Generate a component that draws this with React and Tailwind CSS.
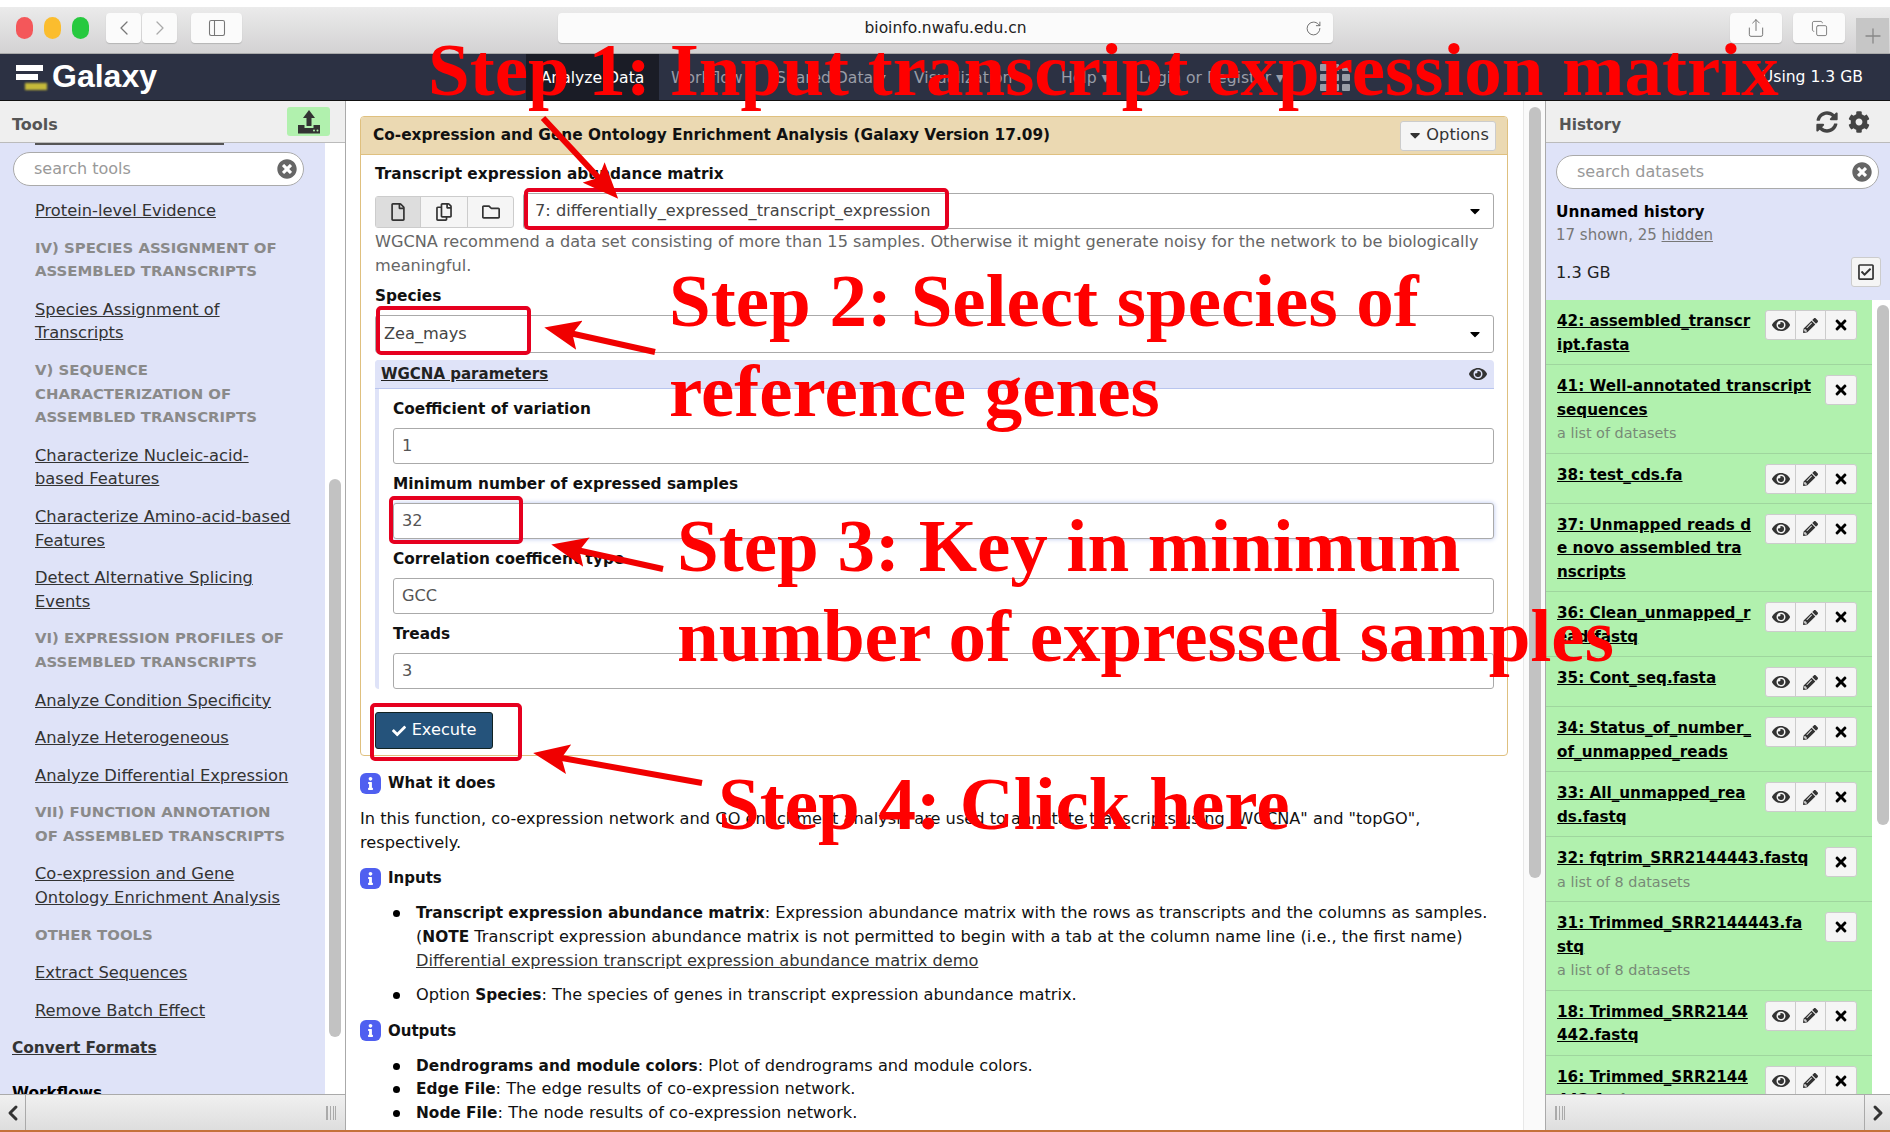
import { ChevronLeft, ChevronRight, RotateCw, Share, Plus, PanelLeft, Copy } from "lucide-react";
import {
  FaEye,
  FaPencilAlt,
  FaTimes,
  FaCheck,
  FaCog,
  FaSyncAlt,
  FaCaretDown,
  FaTimesCircle,
  FaRegFile,
  FaRegCopy,
  FaRegFolder,
  FaRegCheckSquare,
  FaInfo,
} from "react-icons/fa";

const tools = [
  { link: ["Protein-level Evidence"] },
  { head: ["IV) SPECIES ASSIGNMENT OF", "ASSEMBLED TRANSCRIPTS"] },
  { link: ["Species Assignment of", "Transcripts"] },
  { head: ["V) SEQUENCE", "CHARACTERIZATION OF", "ASSEMBLED TRANSCRIPTS"] },
  { link: ["Characterize Nucleic-acid-", "based Features"] },
  { link: ["Characterize Amino-acid-based", "Features"] },
  { link: ["Detect Alternative Splicing", "Events"] },
  { head: ["VI) EXPRESSION PROFILES OF", "ASSEMBLED TRANSCRIPTS"] },
  { link: ["Analyze Condition Specificity"] },
  { link: ["Analyze Heterogeneous"] },
  { link: ["Analyze Differential Expression"] },
  { head: ["VII) FUNCTION ANNOTATION", "OF ASSEMBLED TRANSCRIPTS"] },
  { link: ["Co-expression and Gene", "Ontology Enrichment Analysis"] },
  { head: ["OTHER TOOLS"] },
  { link: ["Extract Sequences"] },
  { link: ["Remove Batch Effect"] },
];

const datasets = [
  { title: ["42: assembled_transcr", "ipt.fasta"], full: true },
  { title: ["41: Well-annotated transcript", "sequences"], sub: "a list of datasets" },
  { title: ["38: test_cds.fa"], full: true },
  { title: ["37: Unmapped reads d", "e novo assembled tra", "nscripts"], full: true },
  { title: ["36: Clean_unmapped_r", "ead.fastq"], full: true },
  { title: ["35: Cont_seq.fasta"], full: true },
  { title: ["34: Status_of_number_", "of_unmapped_reads"], full: true },
  { title: ["33: All_unmapped_rea", "ds.fastq"], full: true },
  { title: ["32: fqtrim_SRR2144443.fastq"], sub: "a list of 8 datasets" },
  { title: ["31: Trimmed_SRR2144443.fa", "stq"], sub: "a list of 8 datasets" },
  { title: ["18: Trimmed_SRR2144", "442.fastq"], full: true },
  { title: ["16: Trimmed_SRR2144", "443.fastq"], full: true },
];

const Lines = ({ lines }) =>
  lines.map((l, i) => (
    <span key={i}>
      {l}
      {i < lines.length - 1 && <br />}
    </span>
  ));

const ToolbarButton = ({ className, children }) => (
  <div className={`h-[30px] bg-[#fbfbfb] rounded-[4px] shadow-[0_1px_1px_#b5b5b5] flex items-center justify-center ${className}`}>
    {children}
  </div>
);

const SearchBox = ({ placeholder, className }) => (
  <div className={`h-[34px] bg-white rounded-full border border-[#aaa] flex items-center justify-between pl-[20px] pr-[6px] text-[16px] text-[#999] ${className}`}>
    <span>{placeholder}</span>
    <FaTimesCircle className="text-[#666] text-[20px]" />
  </div>
);

const Field = ({ label, value, glow }) => (
  <div>
    <div className="font-bold text-[#111] leading-[24px] h-[24px] mt-[8px] mb-[7px] text-[15.35px]">{label}</div>
    <div className={`h-[36px] bg-white border border-[#aaa] rounded-[3px] flex items-center pl-[8px] text-[#555] ${glow ? "shadow-[0_0_5px_#b7c4ee]" : ""}`}>
      {value}
    </div>
  </div>
);

const InfoIcon = () => (
  <span className="w-[21px] h-[21px] rounded-[6px] bg-[#4f5ff0] text-white flex items-center justify-center shrink-0">
    <FaInfo className="text-[13px]" />
  </span>
);

const HelpHead = ({ children, className }) => (
  <div className={`flex items-center gap-[7px] font-bold text-[#111] h-[24px] text-[15px] ${className}`}>
    <InfoIcon />
    {children}
  </div>
);

const Bullet = ({ children, className }) => (
  <div className={`relative pl-[56px] leading-[23.6px] [&_b]:text-[15.35px] [&_b]:leading-none ${className}`}>
    <span className="absolute left-[33px] top-[9px] w-[7px] h-[7px] rounded-full bg-black" />
    {children}
  </div>
);

const Dataset = ({ item }) => (
  <div className="relative pt-[10px] pb-[7px] pl-[11px] border-b border-[#9fd69e] min-h-[50px] leading-[23.5px] shrink-0">
    <div className="font-bold text-black underline text-[15.2px]">
      <Lines lines={item.title} />
    </div>
    {item.sub && <div className="text-[#778a77] text-[14.4px]">{item.sub}</div>}
    <div className="absolute right-[15px] top-[10px] flex h-[30px] bg-[#f5f5f5] border border-[#ccc] rounded-[3px] text-black divide-x divide-[#ccc]">
      {item.full && (
        <>
          <span className="w-[30px] flex items-center justify-center text-[#333] text-[18px]">
            <FaEye />
          </span>
          <span className="w-[30px] flex items-center justify-center text-[#333] text-[15px]">
            <FaPencilAlt />
          </span>
        </>
      )}
      <span className="w-[30px] flex items-center justify-center text-[16px]">
        <FaTimes />
      </span>
    </div>
  </div>
);

const RedBox = ({ className }) => (
  <div className={`absolute border-[4px] border-[#e6001f] rounded-[5px] ${className}`} />
);

const BigText = ({ className, children }) => (
  <div className={`absolute whitespace-nowrap font-['Liberation_Serif',serif] font-bold text-[#ff0000] text-[75px] leading-[76px] ${className}`}>
    {children}
  </div>
);

const Arrow = ({ x1, y1, x2, y2 }) => (
  <line x1={x1} y1={y1} x2={x2} y2={y2} stroke="#f00000" strokeWidth="6" markerEnd="url(#head)" />
);

export default function App() {
  return (
    <div className="relative w-[1890px] h-[1132px] overflow-hidden flex flex-col bg-white font-['DejaVu_Sans',sans-serif] text-[16.2px] text-[#222]">
      <div className="h-[7px] shrink-0 bg-white" />

      {/* safari toolbar */}
      <div className="h-[47px] shrink-0 flex items-start pt-[6px] bg-gradient-to-b from-[#ebebeb] to-[#d3d2d3] border-b border-[#aaa] text-[#777]">
        <span className="w-[17px] h-[22px] ml-[16px] mt-[4px] rounded-full bg-[#f4575a]" />
        <span className="w-[17px] h-[22px] ml-[11px] mt-[4px] rounded-full bg-[#fbbd2e]" />
        <span className="w-[17px] h-[22px] ml-[11px] mt-[4px] rounded-full bg-[#27c93f]" />
        <ToolbarButton className="w-[35px] ml-[17px]"><ChevronLeft size={24} strokeWidth={1.3} /></ToolbarButton>
        <ToolbarButton className="w-[35px] ml-[1px] text-[#aaa]"><ChevronRight size={24} strokeWidth={1.3} /></ToolbarButton>
        <ToolbarButton className="w-[51px] ml-[14px]"><PanelLeft size={20} strokeWidth={1.3} /></ToolbarButton>
        <ToolbarButton className="w-[775px] ml-[316px] relative">
          <span className="text-[#222] text-[15.5px] mt-[2px]">bioinfo.nwafu.edu.cn</span>
          <RotateCw size={17} strokeWidth={1.3} className="absolute right-[11px] text-[#666]" />
        </ToolbarButton>
        <ToolbarButton className="w-[52px] ml-[397px]"><Share size={20} strokeWidth={1.2} /></ToolbarButton>
        <ToolbarButton className="w-[52px] ml-[11px]"><Copy size={17} strokeWidth={1.3} /></ToolbarButton>
        <div className="w-[33px] h-[35px] ml-[11px] mt-[5px] bg-[#c6c6c6] flex items-center justify-center text-[#888]">
          <Plus size={24} strokeWidth={1.3} />
        </div>
      </div>

      {/* masthead */}
      <div className="h-[47px] shrink-0 bg-[#2c3143] border-b border-[#111] flex items-center text-[15.6px] text-[#9a9da8] relative">
        <div className="ml-[16px] w-[28px] relative h-[30px] shrink-0">
          <span className="absolute left-0 top-[3px] w-[27px] h-[6px] bg-white" />
          <span className="absolute left-0 top-[12px] w-[22px] h-[6px] bg-white" />
          <span className="absolute left-[9px] top-[21px] w-[22px] h-[7px] bg-[#c5b93a] blur-[1px]" />
        </div>
        <span className="ml-[8px] w-[105px] text-white font-bold text-[32px] leading-none font-['Liberation_Sans',sans-serif] -mt-[2px]">Galaxy</span>
        <div className="ml-[369px] w-[133px] h-full bg-[#1a1c26] flex items-center justify-center pt-[3px] text-white">Analyze Data</div>
        <span className="ml-[12px] w-[105px] mt-[3px]">Workflow</span>
        <span className="w-[138px] mt-[3px]">Shared Data ▾</span>
        <span className="w-[147px] mt-[3px]">Visualization ▾</span>
        <span className="w-[78px] mt-[3px]">Help ▾</span>
        <span className="w-[181px] mt-[3px] whitespace-nowrap">Login or Register ▾</span>
        <div className="grid grid-cols-3 gap-[3px] w-[30px] shrink-0">
          {[0, 1, 2, 3, 4, 5, 6, 7, 8].map((i) => (
            <span key={i} className="w-[8px] h-[7px] rounded-[1px] bg-[#9a9da8]" />
          ))}
        </div>
        <span className="ml-auto mr-[27px] mt-[1px] text-white">Using 1.3 GB</span>
      </div>

      {/* panels */}
      <div className="flex-1 min-h-0 flex">
        <aside className="w-[346px] shrink-0 flex flex-col border-r border-[#aaa]">
          <div className="h-[42px] shrink-0 bg-[#efefef] border-b border-[#bbb] flex items-center justify-between pl-[12px] pr-[15px]">
            <span className="font-bold text-[#555] text-[16px] mt-[6px]">Tools</span>
            <span className="w-[43px] h-[29px] rounded-[3px] bg-[#b1f1ae] flex items-center justify-center">
              <svg width="24" height="26" viewBox="0 0 24 26" fill="#333">
                <path d="M12 1L18 9H14.5V17H9.5V9H6Z" />
                <path d="M1 16H7.5V19H16.5V16H23V24.5H1Z" />
                <circle cx="17" cy="21.5" r="1" fill="#b1f1ae" />
                <circle cx="20.5" cy="21.5" r="1" fill="#b1f1ae" />
              </svg>
            </span>
          </div>
          <div className="flex-1 min-h-0 flex">
            <div className="w-[325px] bg-[#dfe3f8] overflow-hidden relative leading-[23.6px]">
              <div className="absolute left-[35px] top-0 w-[189px] h-[2px] bg-[#555]" />
              <SearchBox placeholder="search tools" className="ml-[13px] mt-[9px] w-[291px] mb-[13px]" />
              <div className="pl-[35px] mb-[15px] text-[16.3px]">
                {tools.map((t, i) =>
                  t.head ? (
                    <div key={i} className="font-bold text-[#8a8a8a] mb-[14px] text-[14.9px]">
                      <Lines lines={t.head} />
                    </div>
                  ) : (
                    <div key={i} className="text-[#333] underline mb-[14px]">
                      <Lines lines={t.link} />
                    </div>
                  )
                )}
              </div>
              <div className="pl-[12px] font-bold text-[#333] underline text-[15.4px]">Convert Formats</div>
              <div className="pl-[12px] mt-[21px] font-bold text-black text-[15.4px]">Workflows</div>
            </div>
            <div className="flex-1 bg-white pl-[4px] pt-[336px]">
              <div className="w-[12px] h-[558px] rounded-full bg-[#c2c2c2]" />
            </div>
          </div>
          <div className="h-[36px] shrink-0 bg-gradient-to-b from-[#f0f0f0] to-[#dedede] border-t border-[#aaa] flex items-center justify-between">
            <div className="w-[26px] h-full border-r border-[#aaa] flex items-center justify-center text-[#333]">
              <ChevronLeft size={24} strokeWidth={3} />
            </div>
            <span className="mr-[9px] w-[10px] h-[14px] border-x border-[#aaa] bg-[repeating-linear-gradient(90deg,#aaa_0,#aaa_1px,transparent_1px,transparent_3px)]" />
          </div>
        </aside>

        {/* center */}
        <main className="flex-1 min-w-0 flex">
          <div className="flex-1 min-w-0 overflow-hidden pl-[14px] pr-[15px] pt-[15px] bg-white">
            <div className="h-[640px] border border-[#dfc07f] rounded-[4px] overflow-hidden">
              <div className="h-[38px] bg-[#ebd9b2] border-b border-[#dfc07f] flex items-center justify-between pl-[12px] pr-[11px]">
                <span className="font-bold text-[#111] text-[15.35px]">Co-expression and Gene Ontology Enrichment Analysis (Galaxy Version 17.09)</span>
                <span className="h-[30px] w-[96px] bg-[#f5f5f5] border border-[#ccc] rounded-[3px] flex items-center justify-center gap-[3px] text-[#333]">
                  <FaCaretDown />
                  Options
                </span>
              </div>
              <div className="pl-[14px] pr-[13px]">
                <div className="font-bold text-[#111] leading-[24px] mt-[7px] mb-[7px] text-[15.35px]">Transcript expression abundance matrix</div>
                <div className="flex gap-[9px] h-[36px]">
                  <div className="w-[139px] h-[32px] mt-[3px] flex border border-[#ccc] rounded-[3px] bg-[#f5f5f5] divide-x divide-[#ccc] text-[#333] text-[18px]">
                    <span className="w-[45px] bg-[#ddd] flex items-center justify-center"><FaRegFile /></span>
                    <span className="w-[47px] flex items-center justify-center"><FaRegCopy /></span>
                    <span className="flex-1 flex items-center justify-center"><FaRegFolder /></span>
                  </div>
                  <div className="flex-1 border border-[#aaa] rounded-[3px] flex items-center justify-between pl-[11px] pr-[10px] text-[#444]">
                    7: differentially_expressed_transcript_expression
                    <FaCaretDown className="text-black text-[16px]" />
                  </div>
                </div>
                <div className="text-[#666] leading-[24px] mt-[1px] text-[16.15px]">
                  WGCNA recommend a data set consisting of more than 15 samples. Otherwise it might generate noisy for the network to be biologically
                  <br />
                  meaningful.
                </div>
                <div className="font-bold text-[#111] leading-[24px] mt-[6px] mb-[7px] text-[15.35px]">Species</div>
                <div className="h-[38px] border border-[#aaa] rounded-[3px] flex items-center justify-between pl-[8px] pr-[10px] text-[#444]">
                  Zea_mays
                  <FaCaretDown className="text-black text-[16px]" />
                </div>
                <div className="mt-[7px] border-l-[4px] border-[#dfe3f8] rounded-l-[4px]">
                  <div className="h-[29px] -ml-[4px] bg-[#dfe3f8] border-b border-[#b9c5ee] rounded-t-[4px] flex items-center justify-between pl-[6px] pr-[7px]">
                    <span className="font-bold text-[#222] underline text-[15px]">WGCNA parameters</span>
                    <FaEye className="text-[#333] text-[18px]" />
                  </div>
                  <div className="pl-[14px]">
                    <Field label="Coefficient of variation" value="1" />
                    <Field label="Minimum number of expressed samples" value="32" glow />
                    <Field label="Correlation coefficent type" value="GCC" />
                    <Field label="Treads" value="3" />
                  </div>
                </div>
                <div className="mt-[23px] w-[118px] h-[37px] bg-[#25537b] border border-[#122] rounded-[3px] flex items-center justify-center gap-[6px] text-white">
                  <FaCheck className="text-[14px]" />
                  Execute
                </div>
              </div>
            </div>

            <div className="mt-[15px] text-[#111]">
              <HelpHead>What it does</HelpHead>
              <p className="mt-[12px] leading-[23.7px]">
                In this function, co-expression network and GO enrichment analysis are used to annotate transcripts using "WGCNA" and "topGO",
                <br />
                respectively.
              </p>
              <HelpHead className="mt-[12px]">Inputs</HelpHead>
              <Bullet className="mt-[11px]">
                <b>Transcript expression abundance matrix</b>: Expression abundance matrix with the rows as transcripts and the columns as samples.
                <br />
                (<b>NOTE</b> Transcript expression abundance matrix is not permitted to begin with a tab at the column name line (i.e., the first name)
                <br />
                <span className="underline text-[#333]">Differential expression transcript expression abundance matrix demo</span>
              </Bullet>
              <Bullet className="mt-[11px]">
                Option <b>Species</b>: The species of genes in transcript expression abundance matrix.
              </Bullet>
              <HelpHead className="mt-[12px]">Outputs</HelpHead>
              <Bullet className="mt-[11px]"><b>Dendrograms and module colors</b>: Plot of dendrograms and module colors.</Bullet>
              <Bullet><b>Edge File</b>: The edge results of co-expression network.</Bullet>
              <Bullet><b>Node File</b>: The node results of co-expression network.</Bullet>
              <Bullet><b>Module File</b>: The module results of co-expression network.</Bullet>
            </div>
          </div>
          <div className="w-[22px] shrink-0 bg-[#fafafa] border-l border-[#e8e8e8] pl-[5px] pt-[6px]">
            <div className="w-[12px] h-[771px] rounded-full bg-[#c2c2c2]" />
          </div>
        </main>

        {/* history */}
        <aside className="w-[345px] shrink-0 flex flex-col border-l border-[#aaa]">
          <div className="h-[42px] shrink-0 bg-[#efefef] border-b border-[#bbb] flex items-center justify-between pl-[13px] pr-[20px]">
            <span className="font-bold text-[#555] text-[15.2px] mt-[7px]">History</span>
            <span className="flex gap-[10px] text-[#444] text-[22px]">
              <FaSyncAlt />
              <FaCog />
            </span>
          </div>
          <div className="h-[157px] shrink-0 bg-[#dfe3f8] pl-[10px] pr-[10px] pt-[12px] relative">
            <SearchBox placeholder="search datasets" className="w-[323px]" />
            <div className="mt-[11px] font-bold text-black leading-[24px] text-[15.4px]">Unnamed history</div>
            <div className="text-[#777] leading-[22px] text-[15px]">
              17 shown, 25 <span className="underline">hidden</span>
            </div>
            <div className="mt-[15px] text-[#222] leading-[24px]">1.3 GB</div>
            <span className="absolute right-[9px] top-[114px] w-[30px] h-[30px] bg-[#f5f5f5] border border-[#ccc] rounded-[3px] flex items-center justify-center text-[#333] text-[18px]">
              <FaRegCheckSquare />
            </span>
          </div>
          <div className="flex-1 min-h-0 flex bg-white">
            <div className="w-[326px] bg-[#b1f1ae] overflow-hidden flex flex-col">
              {datasets.map((d, i) => (
                <Dataset key={i} item={d} />
              ))}
            </div>
            <div className="flex-1 pl-[5px] pt-[5px]">
              <div className="w-[12px] h-[520px] rounded-full bg-[#c2c2c2]" />
            </div>
          </div>
          <div className="h-[36px] shrink-0 bg-gradient-to-b from-[#f0f0f0] to-[#dedede] border-t border-[#aaa] flex items-center justify-between">
            <span className="ml-[9px] w-[10px] h-[14px] border-x border-[#aaa] bg-[repeating-linear-gradient(90deg,#aaa_0,#aaa_1px,transparent_1px,transparent_3px)]" />
            <div className="w-[26px] h-full border-l border-[#aaa] flex items-center justify-center text-[#333]">
              <ChevronRight size={24} strokeWidth={3} />
            </div>
          </div>
        </aside>
      </div>
      <div className="h-[2px] shrink-0 bg-[#c4713a]" />

      {/* annotations drawn over the screenshot */}
      <RedBox className="left-[524px] top-[188px] w-[425px] h-[42px]" />
      <RedBox className="left-[376px] top-[306px] w-[155px] h-[49px]" />
      <RedBox className="left-[389px] top-[496px] w-[134px] h-[48px]" />
      <RedBox className="left-[370px] top-[703px] w-[152px] h-[58px]" />
      <svg className="absolute left-0 top-0 pointer-events-none" width="1890" height="1132">
        <defs>
          <marker id="head" markerWidth="6" markerHeight="5" refX="4" refY="2.5" orient="auto">
            <path d="M0 0L6 2.5L0 5L1.2 2.5Z" fill="#f00000" />
          </marker>
        </defs>
        <Arrow x1={543} y1={118} x2={610} y2={190} />
        <Arrow x1={655} y1={352} x2={556} y2={330} />
        <Arrow x1={663} y1={569} x2={563} y2={547} />
        <Arrow x1={702} y1={783} x2={545} y2={755} />
      </svg>
      <BigText className="left-[428px] top-[32px]">Step 1: Input transcript expression matrix</BigText>
      <BigText className="left-[669px] top-[263px]">Step 2: Select species of</BigText>
      <BigText className="left-[669px] top-[353px]">reference genes</BigText>
      <BigText className="left-[677px] top-[508px]">Step 3: Key in minimum</BigText>
      <BigText className="left-[677px] top-[598px]">number of expressed samples</BigText>
      <BigText className="left-[718px] top-[766px]">Step 4: Click here</BigText>
    </div>
  );
}
